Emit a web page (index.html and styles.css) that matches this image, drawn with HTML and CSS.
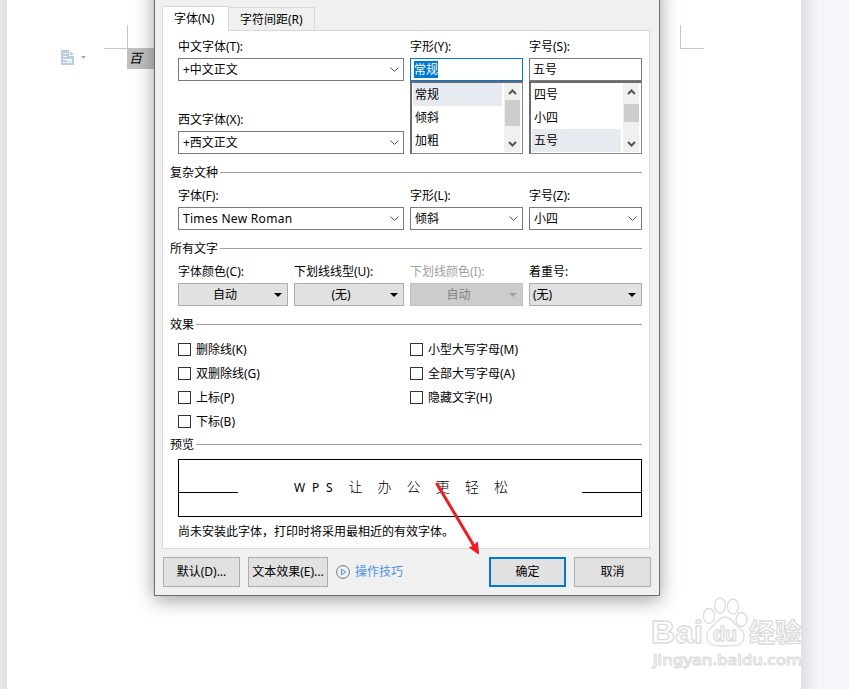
FILE: index.html
```html
<!DOCTYPE html>
<html lang="zh-CN">
<head>
  <meta charset="UTF-8" />
  <meta name="viewport" content="width=device-width, initial-scale=1" />
  <title>字体</title>
  <link rel="stylesheet" href="styles.css">
</head>
<body>
  <div class="page"></div>

  <!-- page margin corners -->
  <svg class="canvas" width="849" height="689" viewBox="0 0 849 689" fill="none">
    <path d="M127.5 25v24M104 48.5h24M680.5 25v24M680 48.5h24" stroke="#c8c8c8" />
    <path d="M61 50h8l5 5v10H61z" fill="#b9cdea" />
    <path d="M69.5 50v5.5H74" stroke="#fff" />
    <path d="M63 53.5h4M63 56.500h4M63 59.500h9M63 62.500h3M67.500 60.500h4v2h-4z" stroke="#fff" />
    <path d="M81 56h5l-2.500 3z" fill="#a9a9a9" />
  </svg>
  <div class="doc-text">百</div>

  <div class="dialog">
    <div class="tabs">
      <div class="tab active">字体(N)</div>
      <div class="tab">字符间距(R)</div>
    </div>

    <div class="panel">
      <div class="row">
        <div class="col wide">
          <label>中文字体(T):</label>
          <div class="combo">+中文正文<svg class="chevron" viewBox="0 0 9 6"><path d="M.5.5l4 4 4-4" /></svg></div>
          <label class="second">西文字体(X):</label>
          <div class="combo">+西文正文<svg class="chevron" viewBox="0 0 9 6"><path d="M.5.5l4 4 4-4" /></svg></div>
        </div>
        <div class="col">
          <label>字形(Y):</label>
          <div class="combo focus"><span class="selected">常规</span></div>
          <div class="list">
            <div class="items">
              <div class="item current">常规</div>
              <div class="item">倾斜</div>
              <div class="item">加粗</div>
            </div>
            <div class="scrollbar">
              <svg viewBox="0 0 9 6"><path d="M1 5l3.500-3.500L8 5" /></svg>
              <div class="track"><div class="thumb"></div></div>
              <svg viewBox="0 0 9 6"><path d="M1 1l3.500 3.500L8 1" /></svg>
            </div>
          </div>
        </div>
        <div class="col">
          <label>字号(S):</label>
          <div class="combo edit">五号</div>
          <div class="list">
            <div class="items">
              <div class="item">四号</div>
              <div class="item">小四</div>
              <div class="item current">五号</div>
            </div>
            <div class="scrollbar">
              <svg viewBox="0 0 9 6"><path d="M1 5l3.500-3.500L8 5" /></svg>
              <div class="track"><div class="thumb size-thumb"></div></div>
              <svg viewBox="0 0 9 6"><path d="M1 1l3.500 3.500L8 1" /></svg>
            </div>
          </div>
        </div>
      </div>

      <div class="group-title">复杂文种</div>
      <div class="row">
        <div class="col wide">
          <label>字体(F):</label>
          <div class="combo roman">Times New Roman<svg class="chevron" viewBox="0 0 9 6"><path d="M.5.5l4 4 4-4" /></svg></div>
        </div>
        <div class="col">
          <label>字形(L):</label>
          <div class="combo">倾斜<svg class="chevron" viewBox="0 0 9 6"><path d="M.5.5l4 4 4-4" /></svg></div>
        </div>
        <div class="col">
          <label>字号(Z):</label>
          <div class="combo">小四<svg class="chevron" viewBox="0 0 9 6"><path d="M.5.5l4 4 4-4" /></svg></div>
        </div>
      </div>

      <div class="group-title">所有文字</div>
      <div class="row">
        <div class="col narrow">
          <label>字体颜色(C):</label>
          <div class="drop"><span>自动</span></div>
        </div>
        <div class="col narrow">
          <label>下划线线型(U):</label>
          <div class="drop"><span>(无)</span></div>
        </div>
        <div class="col disabled">
          <label>下划线颜色(I):</label>
          <div class="drop"><span>自动</span></div>
        </div>
        <div class="col">
          <label>着重号:</label>
          <div class="drop left"><span>(无)</span></div>
        </div>
      </div>

      <div class="group-title">效果</div>
      <div class="effects">
        <div class="checks">
          <div class="check"><i></i>删除线(K)</div>
          <div class="check"><i></i>双删除线(G)</div>
          <div class="check"><i></i>上标(P)</div>
          <div class="check"><i></i>下标(B)</div>
        </div>
        <div class="checks">
          <div class="check"><i></i>小型大写字母(M)</div>
          <div class="check"><i></i>全部大写字母(A)</div>
          <div class="check"><i></i>隐藏文字(H)</div>
        </div>
      </div>

      <div class="group-title preview-title">预览</div>
      <div class="preview">
        <div class="rule"></div>
        <div class="sample"><span class="latin">WPS</span><span class="han">让办公更轻松</span></div>
        <div class="rule"></div>
      </div>
      <div class="hint">尚未安装此字体，打印时将采用最相近的有效字体。</div>
    </div>

    <div class="footer">
      <div class="btn">默认(D)...</div>
      <div class="btn effect-btn">文本效果(E)...</div>
      <div class="tips">
        <svg width="14" height="14" viewBox="0 0 14 14" fill="none">
          <circle cx="7" cy="7" r="6.400" stroke="#6f7780" />
          <path d="M5.500 4.300v5.400L9.800 7z" stroke="#4a90f0" />
        </svg>
        操作技巧
      </div>
      <div class="btn primary">确定</div>
      <div class="btn">取消</div>
    </div>
  </div>

  <!-- arrow and watermark -->
  <svg class="canvas" width="849" height="689" viewBox="0 0 849 689" fill="none">
    <path d="M437 484L474 546" stroke="#ed1c24" stroke-width="3" stroke-linecap="round" />
    <path d="M478.500 554L469.500 547.500L473.500 546L477.500 542z" fill="#ed1c24" stroke="#ed1c24" />
    <g class="watermark">
      <text x="651" y="643" font-size="31" textLength="52" lengthAdjust="spacingAndGlyphs">Bai</text>
      <path d="M725 617c-6 0-8 5-12 9-4 3-7 6-6 12 1 7 6 8 18 8s18-1 19-8c1-6-3-9-7-12-4-4-6-9-12-9z" />
      <ellipse cx="709" cy="616" rx="5.500" ry="7.500" />
      <ellipse cx="720" cy="605.500" rx="5.500" ry="7.500" />
      <ellipse cx="733" cy="606.500" rx="5.500" ry="7.500" />
      <ellipse cx="741.500" cy="619.500" rx="5.500" ry="7" />
      <text x="713" y="641" font-size="20" textLength="24" lengthAdjust="spacingAndGlyphs">du</text>
      <text x="749" y="642" font-size="26" textLength="52">经验</text>
      <text class="url" x="653" y="665" font-size="15" textLength="149" lengthAdjust="spacingAndGlyphs">jingyan.baidu.com</text>
    </g>
  </svg>
</body>
</html>
```
FILE: styles.css
```css
:root {
  --border: #7a7a7a;
  --accent: #0078d7;
  --face: #e1e1e1;
}

* {
  box-sizing: border-box;
}

body {
  margin: 0;
  height: 689px;
  padding: 0 48px 0 7px;
  position: relative;
  overflow: hidden;
  background: linear-gradient(to right, #e7e8ea 0, #e0e1e3 7px, #dfe0e2 801px, #f4f6f9 818px);
  color: #000;
  font: 12px/18px "Noto Sans", "Noto Sans CJK SC", sans-serif;
}

.page {
  height: 100%;
  background: #fff;
}

.canvas {
  position: absolute;
  top: 0;
  left: 0;
}

.doc-text {
  position: absolute;
  left: 127px;
  top: 48px;
  width: 40px;
  height: 21px;
  padding-left: 2px;
  background: #c0c0c0;
  font-size: 13px;
  font-style: italic;
  line-height: 20px;
}

.dialog {
  position: absolute;
  left: 154px;
  top: -20px;
  width: 506px;
  height: 616px;
  padding: 24px 7px 0;
  background: #f0f0f0;
  border: 1px solid #6e6e6e;
  box-shadow: 0 4px 18px rgba(0, 0, 0, 0.38);
}

/* Tabs */
.tabs {
  display: flex;
  align-items: flex-end;
  height: 25px;
}

.tab {
  height: 23px;
  width: 86px;
  padding-left: 11px;
  border: 1px solid #d9d9d9;
  border-left: none;
  border-bottom: none;
  line-height: 23px;
  white-space: nowrap;
}

.tab.active {
  position: relative;
  z-index: 1;
  width: 67px;
  height: 25px;
  margin-bottom: -1px;
  border-left: 1px solid #d9d9d9;
  background: #fff;
}

.panel {
  width: 488px;
  height: 519px;
  padding: 5px 7px 0;
  background: #fff;
  border: 1px solid #d9d9d9;
}

.row {
  display: flex;
  gap: 6px;
  padding-left: 8px;
}

.col {
  width: 113px;
}

.col.wide {
  width: 226px;
}

.col.narrow {
  width: 110px;
}

label {
  display: block;
  height: 22px;
  line-height: 22px;
  white-space: nowrap;
}

label.second {
  margin-top: 28px;
}

.combo {
  display: flex;
  align-items: center;
  height: 23px;
  padding: 0 4px;
  border: 1px solid var(--border);
  background: #fff;
}

.combo.focus {
  padding-left: 3px;
  border-color: var(--accent);
}

.combo.edit {
  padding-left: 3px;
}

.combo.roman {
  letter-spacing: 0.3px;
}

.selected {
  height: 17px;
  line-height: 17px;
  color: #fff;
  background: var(--accent);
}

.chevron {
  width: 9px;
  height: 6px;
  margin-left: auto;
  fill: none;
  stroke: #555;
}

.list {
  display: flex;
  height: 73px;
  padding: 0 1px 1px;
  border: 1px solid #828790;
  border-top: 2px solid #6c6c70;
  border-left: 2px solid #6c6c70;
}

.items {
  flex: 1;
}

.item {
  height: 23px;
  margin-right: 2px;
  padding-left: 2px;
  line-height: 23px;
}

.item.current {
  background: #e7eaf0;
}

.scrollbar {
  display: flex;
  flex-direction: column;
  align-items: center;
  width: 16px;
  margin-right: 1px;
  padding: 6px 0 5px;
  background: #f0f0f0;
}

.scrollbar svg {
  width: 9px;
  height: 6px;
  fill: none;
  stroke: #555;
  stroke-width: 2;
}

.track {
  flex: 1;
  width: 15px;
  padding-top: 5px;
}

.thumb {
  height: 26px;
  background: #cdcdcd;
}

.thumb.size-thumb {
  height: 18px;
  margin-top: 4px;
}

.group-title {
  display: flex;
  align-items: center;
  gap: 2px;
  height: 18px;
  margin: 9px 0 4px;
  padding-top: 2px;
}

.group-title::after {
  content: "";
  flex: 1;
  height: 1px;
  margin-bottom: 2px;
  background: #a0a0a0;
}

.drop {
  display: flex;
  align-items: center;
  height: 23px;
  padding: 0 5px;
  background: var(--face);
  border: 1px solid #adadad;
}

.drop span {
  flex: 1;
  padding-right: 8px;
  text-align: center;
}

.drop.left span {
  padding-right: 0;
  text-align: left;
}

.drop.left {
  padding-left: 3px;
}

.drop::after {
  content: "";
  border: 4px solid transparent;
  border-top-color: #000;
  border-bottom: none;
}

.disabled {
  color: #a0a0a0;
}

.disabled .drop {
  background: #ccc;
  border-color: #bfbfbf;
  color: #838383;
}

.disabled .drop::after {
  border-top-color: #a0a0a0;
}

/* Effects */
.effects {
  display: grid;
  grid-template-columns: 232px 1fr;
  height: 98px;
  padding: 0 0 0 8px;
}

.check {
  display: flex;
  align-items: center;
  gap: 5px;
  height: 24px;
  padding-top: 1px;
}

.check i {
  width: 13px;
  height: 13px;
  margin-bottom: 1px;
  border: 1px solid #333;
}

.preview-title {
  margin: 0 0 6px;
}

.preview {
  display: flex;
  justify-content: space-between;
  align-items: center;
  height: 58px;
  margin-left: 8px;
  border: 1px solid #000;
}

.rule {
  width: 59px;
  height: 1px;
  margin-top: 9px;
  background: #000;
}

.sample {
  flex: 1;
  margin-bottom: 2px;
  padding-left: 56px;
  white-space: nowrap;
}

.latin {
  letter-spacing: 6.8px;
}

.han {
  margin-left: 9px;
  font-size: 14px;
  font-weight: 300;
  letter-spacing: 15.1px;
}

.hint {
  margin: 6px 0 0 8px;
  white-space: nowrap;
}

/* Footer buttons */
.footer {
  display: flex;
  gap: 8px;
  width: 488px;
  margin: 8px 0 0 1px;
}

.btn {
  width: 77px;
  height: 30px;
  border: 1px solid #adadad;
  background: var(--face);
  line-height: 28px;
  text-align: center;
  white-space: nowrap;
}

.btn.effect-btn {
  width: 80px;
}

.btn.primary {
  border: 2px solid var(--accent);
  line-height: 26px;
}

.tips {
  display: flex;
  flex: 1;
  align-items: center;
  gap: 5px;
  color: #4a90f0;
}

.watermark {
  fill: #fff;
  fill-opacity: 0.8;
  stroke: #dcdcdc;
  stroke-width: 1.3;
  font-family: "Liberation Sans", "Noto Sans CJK SC", sans-serif;
  font-weight: bold;
}

.url {
  font-family: "Noto Sans", sans-serif;
  font-weight: 500;
  stroke-width: 1;
}
```
